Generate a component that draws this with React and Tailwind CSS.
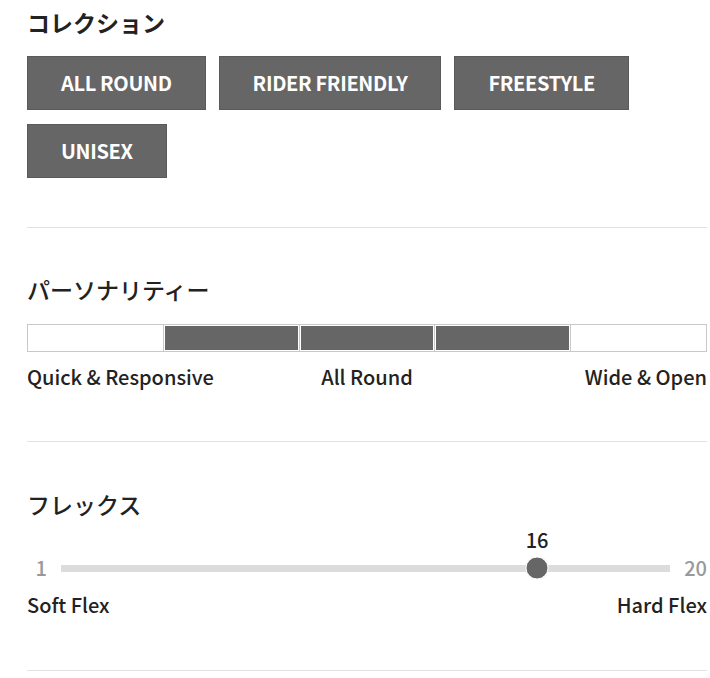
const font = { fontFamily: '"Noto Sans CJK JP", "Noto Sans", sans-serif' };

const collections = ['ALL ROUND', 'RIDER FRIENDLY', 'FREESTYLE', 'UNISEX'];
const personality = [false, true, true, true, false];

const App = () => {
  const flex = 16;
  const ratio = (flex - 1) / 19;

  return (
    <div className="bg-white text-[#222] pl-[27px] pr-[3px]" style={font}>
      {/* コレクション */}
      <section className="pt-[6px] pb-[49px] border-b border-[#e2e2e2]">
        <h2 className="text-[23px] font-bold leading-[32px]">コレクション</h2>
        <div className="mt-[18px] flex flex-wrap gap-x-[13px] gap-y-[14px]">
          {collections.map((c) => (
            <span
              key={c}
              className="h-[54px] px-[33px] flex items-center bg-[#666] border border-[#5a5a5a] text-white text-[20px] font-bold tracking-[-0.35px]"
            >
              {c}
            </span>
          ))}
        </div>
      </section>

      {/* パーソナリティー */}
      <section className="pt-[45px] pb-[48px] border-b border-[#e2e2e2]">
        <h2 className="text-[23px] font-medium leading-[32px]">パーソナリティー</h2>
        <div className="mt-[19px] h-[28px] flex border border-[#c9c9c9]">
          {personality.map((on, i) => (
            <div key={i} className={`flex-1 ${i > 0 ? 'border-l border-[#c9c9c9]' : ''} p-px`}>
              {on && <div className="h-full bg-[#666]" />}
            </div>
          ))}
        </div>
        <div className="mt-[9px] grid grid-cols-3 text-[20px] font-medium leading-[32px]">
          <span className="whitespace-nowrap">Quick &amp; Responsive</span>
          <span className="text-center">All Round</span>
          <span className="text-right">Wide &amp; Open</span>
        </div>
      </section>

      {/* フレックス */}
      <section className="pt-[46px] pb-[49px] border-b border-[#e2e2e2]">
        <h2 className="text-[23px] font-medium leading-[32px]">フレックス</h2>
        <div className="mt-[34px] h-[28px] flex items-center">
          <span className="w-[20px] text-right text-[20px] text-[#999] font-medium leading-[28px]">1</span>
          <div className="flex-1 mx-[14px] relative h-[7px] bg-[#dcdcdc]">
            <div
              className="absolute top-1/2 -translate-x-1/2 -translate-y-1/2 w-[23px] h-[23px] rounded-full bg-[#666] border border-white"
              style={{ left: `calc(${ratio} * (100% - 22px) + 12.5px)` }}
            >
              <span className="absolute left-1/2 -translate-x-1/2 bottom-[25px] text-[20px] text-[#222] font-medium leading-[28px]">
                {flex}
              </span>
            </div>
          </div>
          <span className="text-[20px] text-[#999] font-medium leading-[28px]">20</span>
        </div>
        <div className="mt-[7px] flex justify-between text-[20px] font-medium leading-[32px]">
          <span>Soft Flex</span>
          <span>Hard Flex</span>
        </div>
      </section>
    </div>
  );
};

export default App;
